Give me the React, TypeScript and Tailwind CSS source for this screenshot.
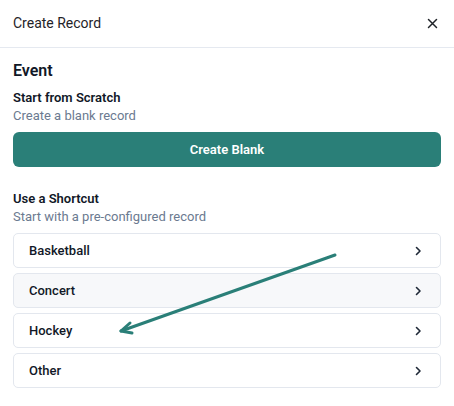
import React from "react";

const shortcuts = ["Basketball", "Concert", "Hockey", "Other"];

function Chevron() {
  return (
    <svg width="10" height="10" viewBox="0 0 10 10" fill="none" stroke="#1f2937" strokeWidth="1.6" strokeLinecap="round" strokeLinejoin="round">
      <path d="M3.5 1.5 L7 5 L3.5 8.5" />
    </svg>
  );
}

export default function App() {
  return (
    <div
      className="relative w-[454px] h-[406px] bg-white text-[#111827]"
      style={{ fontFamily: 'Roboto, "Noto Sans", sans-serif' }}
    >
      <div className="flex h-[48px] items-center justify-between border-b border-[#e5e9f0] pl-[13px] pr-[16px]">
        <span className="text-[14px] text-[#1f2328]">Create Record</span>
        <svg width="11" height="11" viewBox="0 0 11 11" stroke="#1f2328" strokeWidth="1.5" strokeLinecap="round">
          <path d="M1.5 1.5 L9.5 9.5 M9.5 1.5 L1.5 9.5" />
        </svg>
      </div>

      <div className="px-[13px] pt-[11px]">
        <h2 className="text-[16px] font-semibold leading-[24px]">Event</h2>

        <div className="mt-[6px]">
          <div className="text-[13px] font-semibold leading-[18px]">Start from Scratch</div>
          <div className="text-[13px] leading-[18px] text-[#6b7a90]">Create a blank record</div>
        </div>

        <button className="mt-[7px] flex h-[35px] w-full items-center justify-center rounded-[6px] bg-[#2a7f78] text-[13px] font-semibold text-white">
          Create Blank
        </button>

        <div className="mt-[23px]">
          <div className="text-[13px] font-semibold leading-[18px]">Use a Shortcut</div>
          <div className="text-[13px] leading-[18px] text-[#6b7a90]">Start with a pre-configured record</div>
        </div>

        <div className="mt-[7px] flex flex-col gap-[5px]">
          {shortcuts.map((s) => (
            <div
              key={s}
              className={`flex h-[35px] items-center justify-between rounded-[5px] border border-[#e3e7ee] pl-[15px] pr-[17px] ${
                s === "Concert" ? "bg-[#f7f8fa]" : "bg-white"
              }`}
            >
              <span className="text-[13px] font-medium text-[#111827]">{s}</span>
              <Chevron />
            </div>
          ))}
        </div>
      </div>

      <svg className="pointer-events-none absolute left-0 top-0" width="454" height="406">
        <g stroke="#2a7f78" strokeWidth="3" strokeLinecap="round" strokeLinejoin="round" fill="none">
          <path d="M335 255 L121 331" />
          <path d="M121 331 L130 323 M121 331 L132 333" />
        </g>
      </svg>
    </div>
  );
}
